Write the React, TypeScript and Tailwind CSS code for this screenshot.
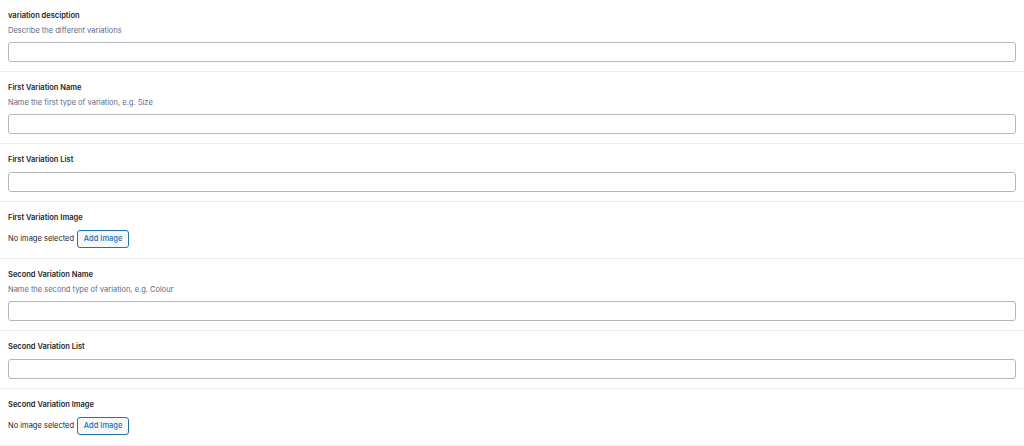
import React from 'react';

type Field = {
  label: string;
  description?: string;
  kind: 'text' | 'image';
};

const fields: Field[] = [
  { label: 'variation desciption', description: 'Describe the different variations', kind: 'text' },
  { label: 'First Variation Name', description: 'Name the first type of variation, e.g. Size', kind: 'text' },
  { label: 'First Variation List', kind: 'text' },
  { label: 'First Variation Image', kind: 'image' },
  { label: 'Second Variation Name', description: 'Name the second type of variation, e.g. Colour', kind: 'text' },
  { label: 'Second Variation List', kind: 'text' },
  { label: 'Second Variation Image', kind: 'image' },
];

function FieldRow({ field }: { field: Field }) {
  return (
    <div className="border-b border-[#eeeeee] px-2 pt-[11px] pb-[9px]">
      <label
        className={
          'block text-[7.5px] leading-[10px] font-semibold text-[#1d2327] ' +
          (field.description ? 'mb-[5px]' : 'mb-[7px]')
        }
      >
        {field.label}
      </label>
      {field.description && (
        <p className="mb-[6px] text-[7.5px] leading-[10px] text-[#5a6a86]">{field.description}</p>
      )}
      {field.kind === 'text' ? (
        <input
          type="text"
          className="block h-[20px] w-full rounded-[3px] border border-[#b4b6b9] bg-white px-1 text-[8px] outline-none"
        />
      ) : (
        <div className="flex items-center gap-[3px] pb-[1px]">
          <span className="text-[7.5px] leading-[10px] text-[#1d2327]">No image selected</span>
          <button
            type="button"
            className="h-[18px] w-[52px] rounded-[3px] border border-[#2271b1] bg-[#f6f7f7] text-[7.5px] font-medium text-[#2271b1]"
          >
            Add Image
          </button>
        </div>
      )}
    </div>
  );
}

export default function App() {
  return (
    <div className="min-h-screen bg-white font-['Inter','Noto_Sans',sans-serif]">
      {fields.map((f) => (
        <FieldRow key={f.label} field={f} />
      ))}
    </div>
  );
}
